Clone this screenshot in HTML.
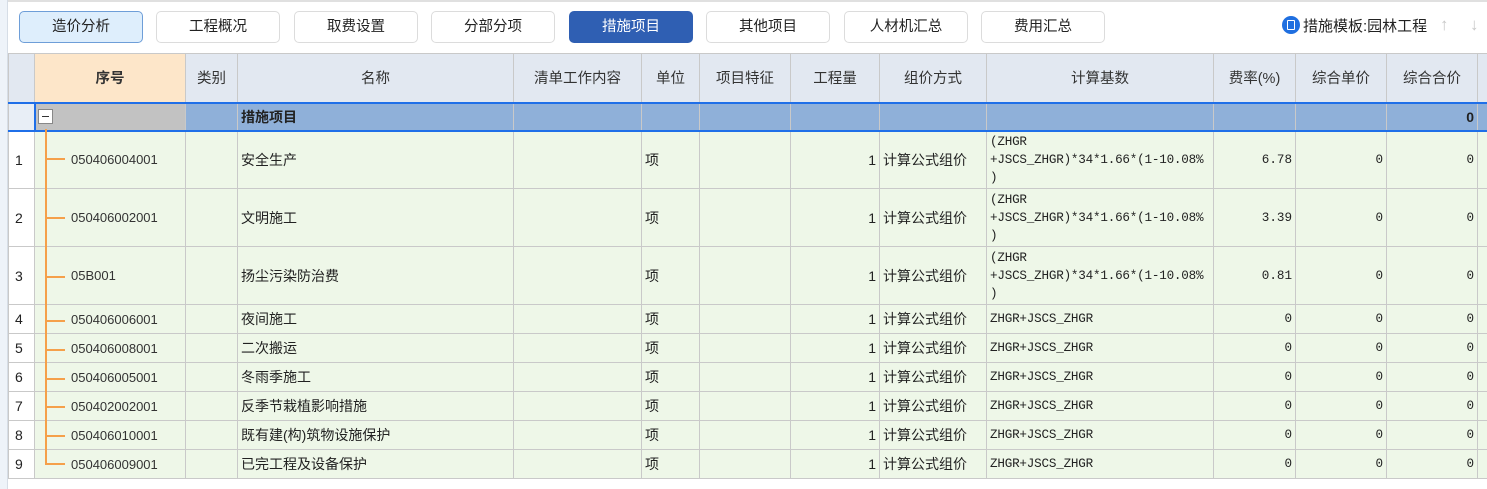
<!DOCTYPE html>
<html><head><meta charset="utf-8"><style>
*{margin:0;padding:0;box-sizing:border-box}
body{width:1487px;height:489px;background:#fff;position:relative;overflow:hidden;font-family:"Liberation Sans","Noto Sans CJK SC",sans-serif;font-size:14px;color:#222}
.strip{position:absolute;left:0;top:0;width:8px;height:489px;background:#eef3f9;border-right:1px solid #d6dde6}
.topline{position:absolute;left:0;top:0;width:1487px;height:2px;background:#e0e0e0}
.btn{position:absolute;top:11px;height:32px;width:124px;border:1px solid #dcdcdc;border-radius:5px;background:#fff;text-align:center;line-height:30px;font-size:14.5px;color:#222}
.btn.first{background:#deeefc;border-color:#6e9ed8}
.btn.act{background:#2f5fb3;border-color:#2f5fb3;color:#fff}
.tmpl{position:absolute;left:1282px;top:16px;font-size:15px;line-height:22px;color:#222}
.tmpl .ic{display:inline-block;width:18px;height:18px;border-radius:50%;background:#1f6fe0;vertical-align:-3px;position:relative;margin-right:3px}
.tmpl .ic:after{content:"";position:absolute;left:5px;top:4px;width:6px;height:8px;border:1.5px solid #fff;border-radius:1px}
.arr{position:absolute;top:15px;color:#c8c8c8;font-size:17px}
table{position:absolute;left:8px;top:53px;border-collapse:collapse;table-layout:fixed;width:1480px}
td,th{border:1px solid #c9c9c9;padding:0 3px;white-space:nowrap;overflow:hidden;font-weight:normal}
th{background:#e2e8f1;height:49px;font-size:14.5px;color:#333;text-align:center}
th.seq{background:#fde6c9;font-weight:bold}
tr.g td{background:#8fb0d9;height:28px;border-top:2px solid #1f6fe8;border-bottom:2px solid #1f6fe8;font-weight:bold}
tr.r td{background:#eef7e8}
tr.r td.n{background:#fff;text-align:left;padding-left:6px;font-size:14px}
td.n0{background:#e8eef6 !important}
.r3 td{height:58px}
.r1 td{height:29px}
.code{padding-left:36px !important;font-size:13px;color:#333}
.f{font-family:"Liberation Mono",monospace;font-size:12.6px;line-height:18px;letter-spacing:-0.2px;white-space:pre;vertical-align:middle}
.num{text-align:right;font-family:"Liberation Mono",monospace;font-size:12.6px}
.q{text-align:right}
.vl{position:absolute;z-index:10;left:45px;top:129px;width:2px;height:336px;background:#f5a04a}
.hl{position:absolute;z-index:10;left:45px;width:20px;height:2px;background:#f5a04a}
.minus{position:absolute;z-index:10;left:38px;top:109px;width:15px;height:15px;border:1px solid #888;background:#fff}
.minus:after{content:"";position:absolute;left:3px;top:6px;width:7px;height:1px;background:#333}
</style></head><body>
<div class="topline"></div>
<div class="strip"></div>
<div class="btn first" style="left:19px">造价分析</div>
<div class="btn" style="left:156px">工程概况</div>
<div class="btn" style="left:294px">取费设置</div>
<div class="btn" style="left:431px">分部分项</div>
<div class="btn act" style="left:569px">措施项目</div>
<div class="btn" style="left:706px">其他项目</div>
<div class="btn" style="left:844px">人材机汇总</div>
<div class="btn" style="left:981px">费用汇总</div>
<div class="tmpl"><span class="ic"></span>措施模板:园林工程</div>
<div class="arr" style="left:1440px">↑</div>
<div class="arr" style="left:1470px">↓</div>
<table>
<colgroup><col style="width:26px"><col style="width:151px"><col style="width:52px"><col style="width:276px"><col style="width:128px"><col style="width:58px"><col style="width:91px"><col style="width:89px"><col style="width:107px"><col style="width:227px"><col style="width:82px"><col style="width:91px"><col style="width:91px"><col style="width:11px"></colgroup>
<tr><th></th><th class="seq">序号</th><th>类别</th><th>名称</th><th>清单工作内容</th><th>单位</th><th>项目特征</th><th>工程量</th><th>组价方式</th><th>计算基数</th><th>费率(%)</th><th>综合单价</th><th>综合合价</th><th></th></tr>
<tr class="g"><td class="n0"></td><td style="background:#c2c2c2;border-left:2px solid #1f6fe8"></td><td></td><td>措施项目</td><td></td><td></td><td></td><td></td><td></td><td></td><td></td><td></td><td class="q">0</td><td></td></tr>
<tr class="r r3"><td class="n">1</td><td class="code">050406004001</td><td></td><td>安全生产</td><td></td><td>项</td><td></td><td class="q">1</td><td>计算公式组价</td><td class="f">(ZHGR
+JSCS_ZHGR)*34*1.66*(1-10.08%
)</td><td class="num">6.78</td><td class="num">0</td><td class="num">0</td><td></td></tr>
<tr class="r r3"><td class="n">2</td><td class="code">050406002001</td><td></td><td>文明施工</td><td></td><td>项</td><td></td><td class="q">1</td><td>计算公式组价</td><td class="f">(ZHGR
+JSCS_ZHGR)*34*1.66*(1-10.08%
)</td><td class="num">3.39</td><td class="num">0</td><td class="num">0</td><td></td></tr>
<tr class="r r3"><td class="n">3</td><td class="code">05B001</td><td></td><td>扬尘污染防治费</td><td></td><td>项</td><td></td><td class="q">1</td><td>计算公式组价</td><td class="f">(ZHGR
+JSCS_ZHGR)*34*1.66*(1-10.08%
)</td><td class="num">0.81</td><td class="num">0</td><td class="num">0</td><td></td></tr>
<tr class="r r1"><td class="n">4</td><td class="code">050406006001</td><td></td><td>夜间施工</td><td></td><td>项</td><td></td><td class="q">1</td><td>计算公式组价</td><td class="f">ZHGR+JSCS_ZHGR</td><td class="num">0</td><td class="num">0</td><td class="num">0</td><td></td></tr>
<tr class="r r1"><td class="n">5</td><td class="code">050406008001</td><td></td><td>二次搬运</td><td></td><td>项</td><td></td><td class="q">1</td><td>计算公式组价</td><td class="f">ZHGR+JSCS_ZHGR</td><td class="num">0</td><td class="num">0</td><td class="num">0</td><td></td></tr>
<tr class="r r1"><td class="n">6</td><td class="code">050406005001</td><td></td><td>冬雨季施工</td><td></td><td>项</td><td></td><td class="q">1</td><td>计算公式组价</td><td class="f">ZHGR+JSCS_ZHGR</td><td class="num">0</td><td class="num">0</td><td class="num">0</td><td></td></tr>
<tr class="r r1"><td class="n">7</td><td class="code">050402002001</td><td></td><td>反季节栽植影响措施</td><td></td><td>项</td><td></td><td class="q">1</td><td>计算公式组价</td><td class="f">ZHGR+JSCS_ZHGR</td><td class="num">0</td><td class="num">0</td><td class="num">0</td><td></td></tr>
<tr class="r r1"><td class="n">8</td><td class="code">050406010001</td><td></td><td>既有建(构)筑物设施保护</td><td></td><td>项</td><td></td><td class="q">1</td><td>计算公式组价</td><td class="f">ZHGR+JSCS_ZHGR</td><td class="num">0</td><td class="num">0</td><td class="num">0</td><td></td></tr>
<tr class="r r1"><td class="n">9</td><td class="code">050406009001</td><td></td><td>已完工程及设备保护</td><td></td><td>项</td><td></td><td class="q">1</td><td>计算公式组价</td><td class="f">ZHGR+JSCS_ZHGR</td><td class="num">0</td><td class="num">0</td><td class="num">0</td><td></td></tr>
</table>
<div class="minus"></div>
<div class="vl" style="height:335px"></div>
<div class="hl" style="top:158px"></div>
<div class="hl" style="top:217px"></div>
<div class="hl" style="top:276px"></div>
<div class="hl" style="top:320px"></div>
<div class="hl" style="top:349px"></div>
<div class="hl" style="top:378px"></div>
<div class="hl" style="top:406px"></div>
<div class="hl" style="top:435px"></div>
<div class="hl" style="top:463px"></div>
</body></html>
